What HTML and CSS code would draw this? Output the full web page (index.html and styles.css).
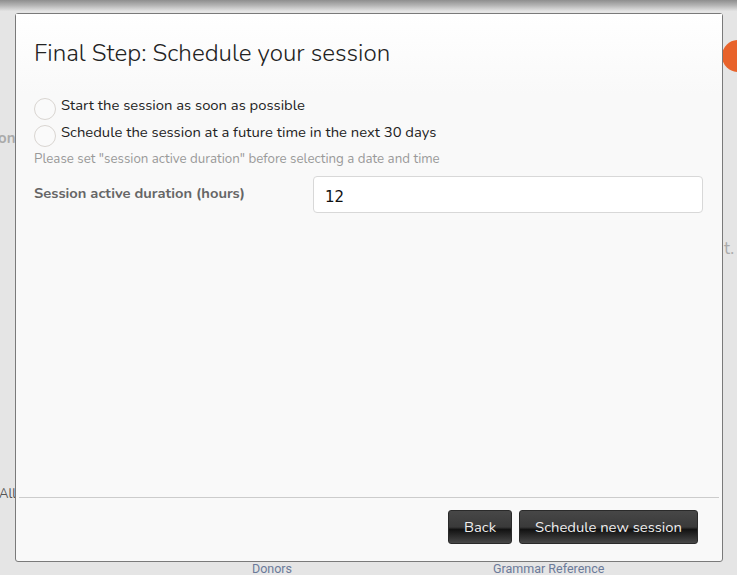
FILE: index.html
```html
<!DOCTYPE html>
<html>
<head>
<meta charset="utf-8">
<link rel="stylesheet" href="styles.css">
</head>
<body>
<div class="page">
  <div class="topbar"></div>
  <div class="bg-frag bg-on">on</div>
  <div class="bg-frag bg-t">t.</div>
  <div class="bg-frag bg-all">All</div>
  <div class="bg-dot"></div>
  <div class="bg-links"><span class="l1">Donors</span><span class="l2">Grammar Reference</span></div>
</div>
<div class="modal">
  <div class="modal-header">
    <h2 class="modal-title">Final Step: Schedule your session</h2>
  </div>
  <div class="modal-body">
    <label class="radio-row"><span class="radio"></span><span class="radio-text">Start the session as soon as possible</span></label>
    <label class="radio-row"><span class="radio"></span><span class="radio-text">Schedule the session at a future time in the next 30 days</span></label>
    <div class="help">Please set "session active duration" before selecting a date and time</div>
    <div class="field">
      <div class="field-label">Session active duration (hours)</div>
      <div class="input">12</div>
    </div>
  </div>
  <div class="modal-footer">
    <button class="btn btn-back">Back</button>
    <button class="btn btn-main">Schedule new session</button>
  </div>
</div>
</body>
</html>
```
FILE: styles.css
```css
html, body {
  margin: 0;
  padding: 0;
}
body {
  background: #e5e5e5;
  width: 737px;
  height: 575px;
  overflow: hidden;
  position: relative;
  font-family: "Nunito", "Lato", "Open Sans", sans-serif;
}
.page {
  height: 575px;
  position: relative;
}
.topbar {
  height: 11px;
  background: linear-gradient(#8e8e8e, #b5b5b5 50%, #e3e3e3);
}
.bg-frag {
  position: absolute;
  color: #999;
}
.bg-on {
  left: -2px;
  top: 128px;
  font-size: 15px;
  font-weight: bold;
  color: #aaa;
}
.bg-t {
  left: 724px;
  top: 237px;
  font-size: 17px;
  color: #aaa;
}
.bg-all {
  left: -1px;
  top: 485px;
  font-size: 13px;
  color: #555;
}
.bg-dot {
  position: absolute;
  left: 722px;
  top: 40px;
  width: 32px;
  height: 32px;
  border-radius: 50%;
  background: #e8632b;
}
.bg-links {
  position: absolute;
  left: 0;
  top: 561px;
  font-size: 12.5px;
  color: #6b7a99;
  font-family: "Roboto", sans-serif;
}
.bg-links .l1 {
  position: absolute;
  left: 252px;
  white-space: nowrap;
}
.bg-links .l2 {
  position: absolute;
  left: 493px;
  white-space: nowrap;
}
.modal {
  position: absolute;
  left: 15px;
  top: 13px;
  width: 708px;
  height: 549px;
  box-sizing: border-box;
  border: 1px solid #7a7a7a;
  border-radius: 3px;
  background: #f9f9f9;
  display: flex;
  flex-direction: column;
}
.modal-header {
  height: 80px;
  box-sizing: border-box;
  padding: 24px 18px 0 18px;
  background: linear-gradient(#ffffff, #f9f9f9);
}
.modal-title {
  margin: 0;
  font-size: 24.2px;
  font-weight: 300;
  color: #222;
  line-height: 32px;
}
.modal-body {
  flex: 1;
  padding: 1px 18px 0 18px;
}
.radio-row {
  display: flex;
  align-items: center;
  height: 27px;
}
.radio {
  width: 22px;
  height: 22px;
  box-sizing: border-box;
  border: 1px solid #d9d5d1;
  border-radius: 50%;
  background: #fafafa;
  margin-right: 5px;
}
.radio-text {
  font-size: 14.8px;
  color: #222;
  position: relative;
  top: -4px;
}
.help {
  font-size: 13.3px;
  color: #999;
  margin-top: 2px;
  line-height: 16px;
}
.field {
  display: flex;
  align-items: flex-start;
  margin-top: 9px;
}
.field-label {
  width: 279px;
  font-size: 14.7px;
  font-weight: bold;
  color: #666;
  padding-top: 7px;
}
.input {
  width: 390px;
  height: 37px;
  box-sizing: border-box;
  border: 1px solid #d8d8d8;
  border-radius: 4px;
  background: #fff;
  font-family: "DejaVu Sans", sans-serif;
  font-size: 15px;
  color: #111;
  padding: 11px 11px 0;
  line-height: 18px;
}
.modal-footer {
  margin: 0 3px;
  border-top: 1px solid #ccc;
  height: 64px;
  box-sizing: border-box;
  display: flex;
  justify-content: flex-end;
  align-items: flex-start;
  padding: 12px 21px 0 0;
  gap: 7px;
}
.btn {
  height: 34px;
  box-sizing: border-box;
  border: 1px solid #2a2a2a;
  border-radius: 3px;
  color: #eee;
  font-family: "Nunito", "Lato", "Open Sans", sans-serif;
  font-size: 14.8px;
  padding: 0 10px;
  background: linear-gradient(#474747, #3a3a3a 50%, #121212 58%, #2e2e2e 80%, #484848);
}
.btn-back {
  width: 64px;
}
.btn-main {
  width: 179px;
}
```
